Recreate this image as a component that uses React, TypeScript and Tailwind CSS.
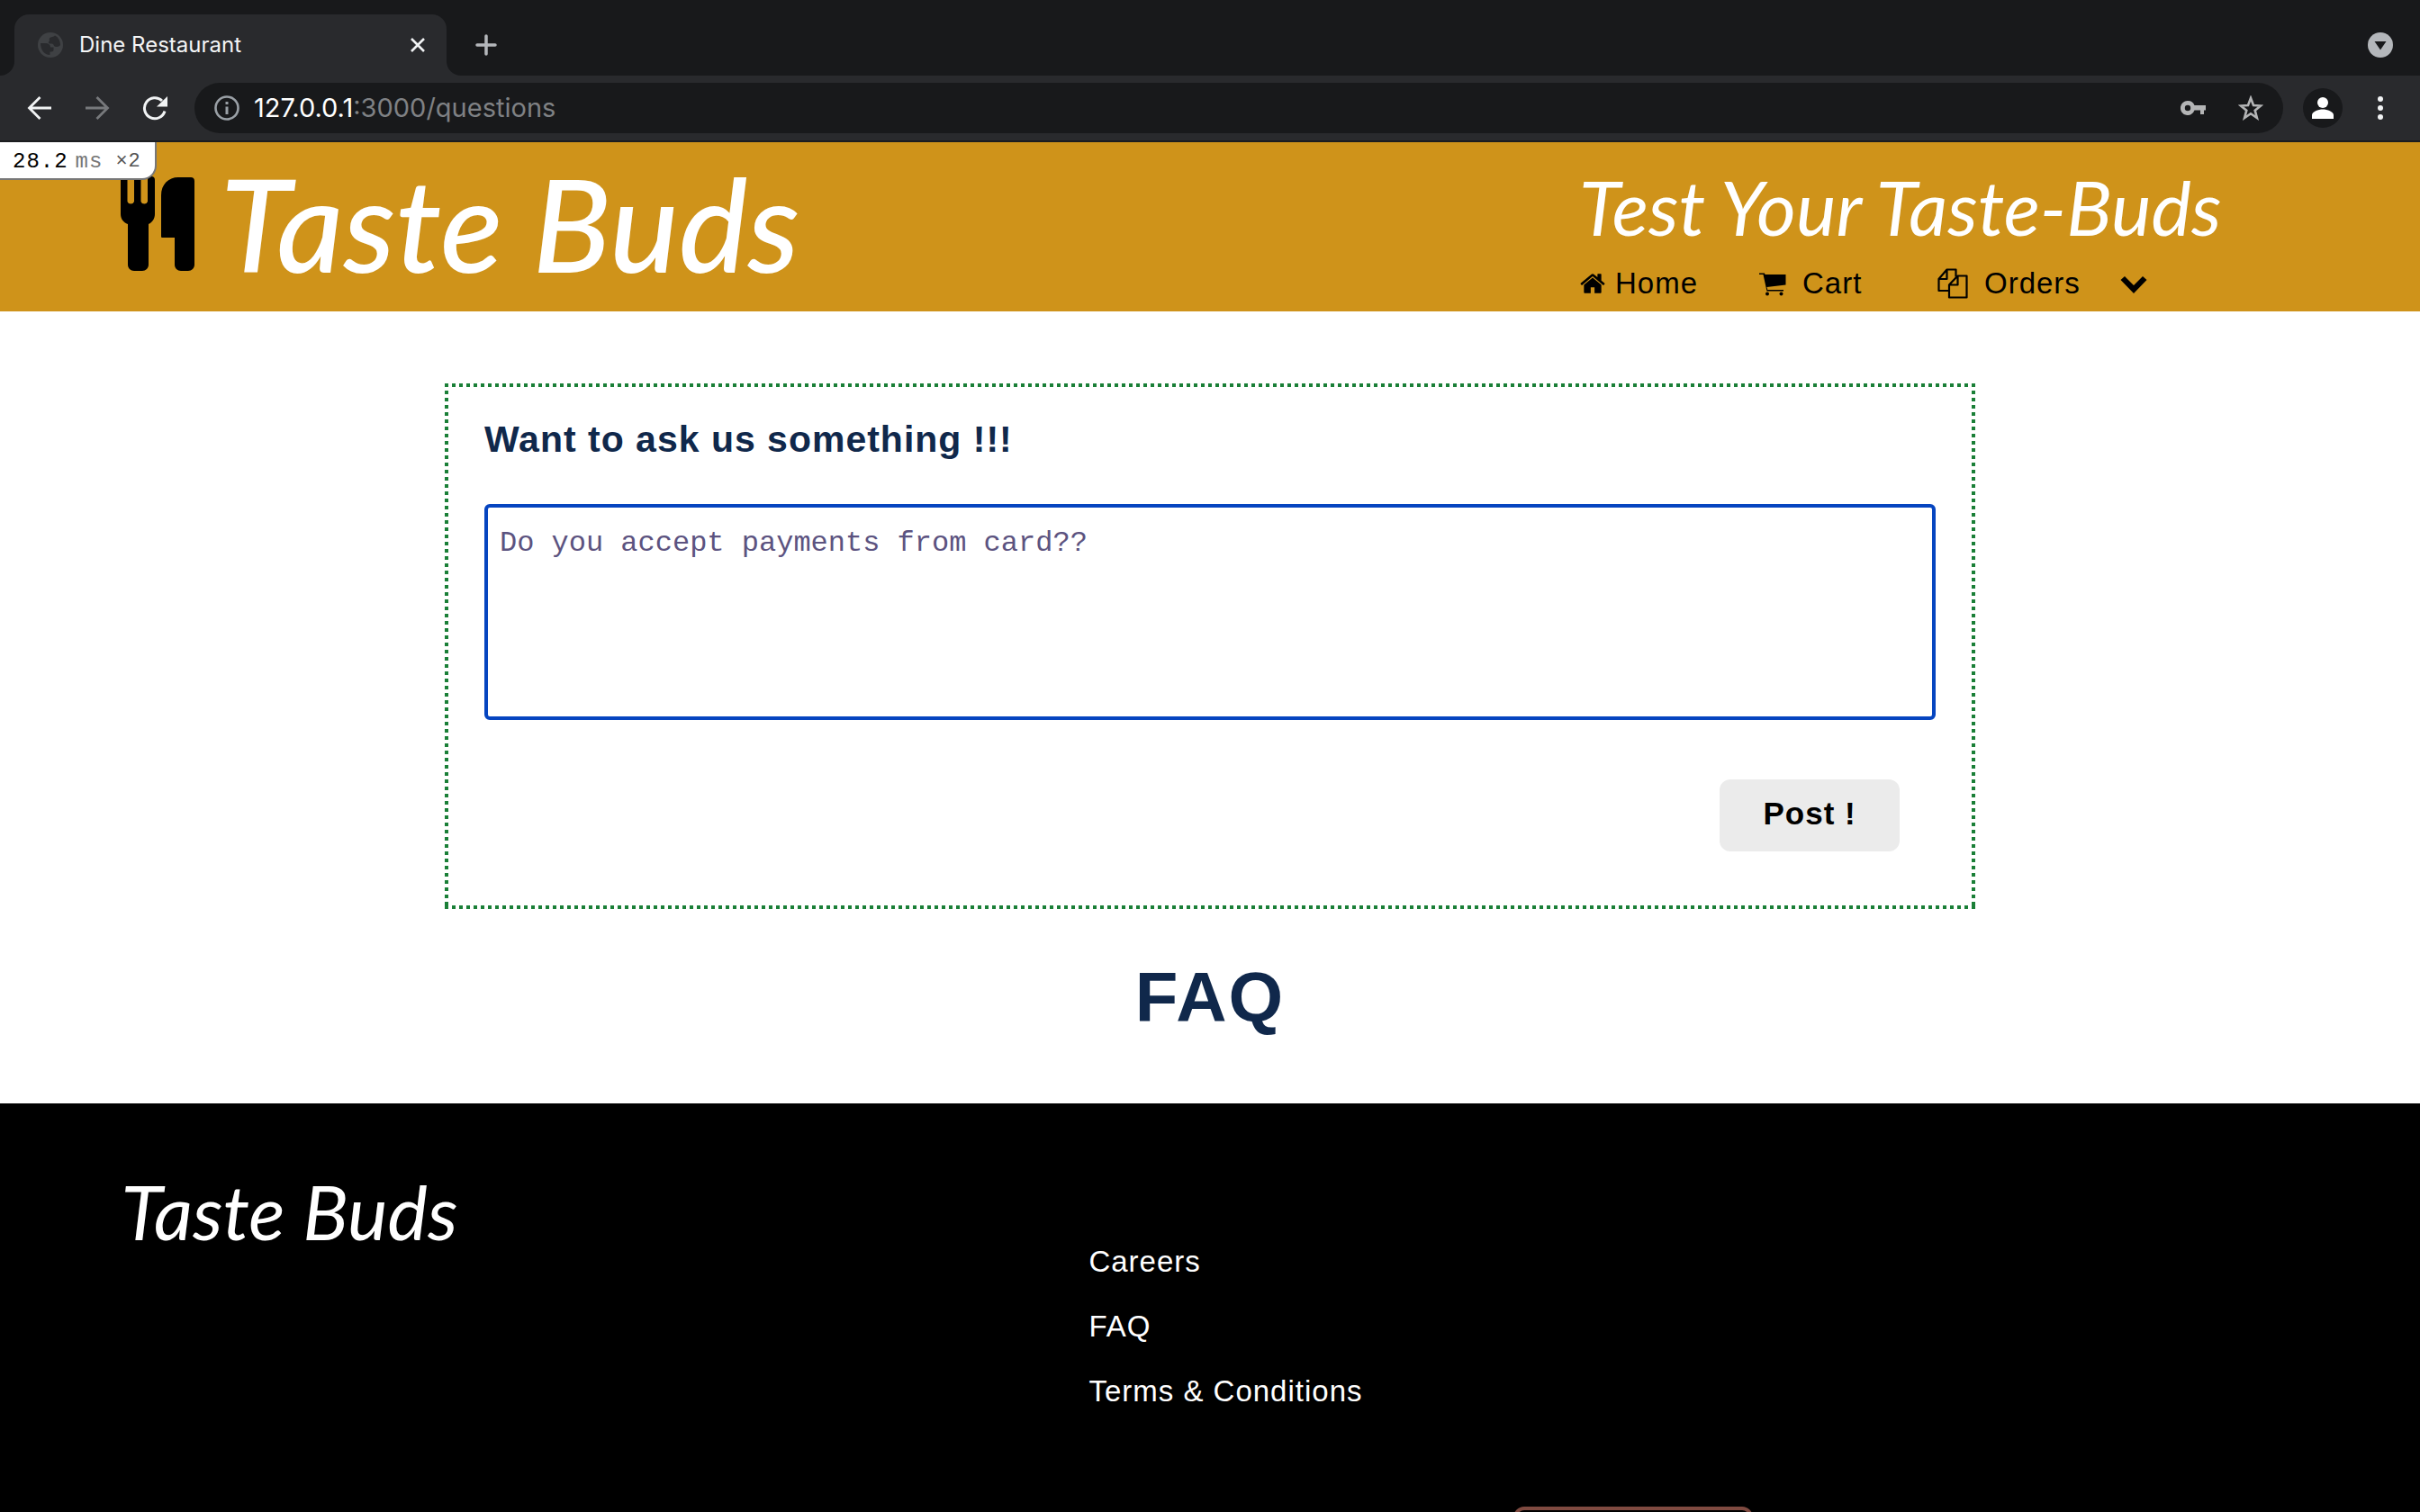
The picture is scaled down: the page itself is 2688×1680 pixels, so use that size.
import React from "react";

const HOME =
  "M1472 992v480q0 26-19 45t-45 19h-384v-384h-256v384h-384q-26 0-45-19t-19-45v-480q0-1 .5-3t.5-3l575-474 575 474q1 2 1 6zm223-69l-62 74q-8 9-21 11h-3q-13 0-21-7l-692-577-692 577q-12 8-24 7-13-2-21-11l-62-74q-8-10-7-23.5t11-21.5l719-599q32-26 76-26t76 26l244 204v-195q0-14 9-23t23-9h192q14 0 23 9t9 23v408l219 182q10 8 11 21.5t-7 23.5z";

function BrowserChrome() {
  return (
    <div className="shrink-0 font-['Inter',sans-serif]">
      <div className="flex h-[84px] items-end bg-[#18191b] pl-4 pr-[30px]">
        <div className="relative flex h-[68px] w-[480px] items-center rounded-t-2xl bg-[#292a2d] pl-[26px] pr-6">
          <svg className="absolute -left-4 bottom-0 size-4" viewBox="0 0 16 16" fill="#292a2d" aria-hidden="true">
            <path d="M16 0v16H0A16 16 0 0 0 16 0z" />
          </svg>
          <svg className="absolute -right-4 bottom-0 size-4" viewBox="0 0 16 16" fill="#292a2d" aria-hidden="true">
            <path d="M0 0v16h16A16 16 0 0 1 0 0z" />
          </svg>
          <svg className="size-7" viewBox="0 0 28 28" aria-hidden="true">
            <circle cx="14" cy="14" r="14" fill="#3f4144" />
            <path
              d="M3 12h5c4 0 6 1.500 6 4.500h3.500v3c0 2-2 2-4 2v3.500C7 25 3 19 3 12zM19 3.500c-1 2-5 1-6 3-.8 1.500.5 2.500-.5 3.500s-1 2.500 1 2.500h2c2.500 0 2 3.500 4.500 3.500s4-.5 5-2C25 9 22.500 5 19 3.500z"
              fill="#292a2d"
            />
          </svg>
          <span className="ml-[18px] flex-1 text-2xl text-[#f4f5f6]">Dine Restaurant</span>
          <button aria-label="Close tab" className="size-4">
            <svg viewBox="0 0 16 16" stroke="#f1f3f4" strokeWidth="2.6">
              <path d="M1 1l14 14M15 1L1 15" />
            </svg>
          </button>
        </div>
        <button aria-label="New tab" className="mb-[22px] ml-8 size-6">
          <svg viewBox="0 0 24 24" stroke="#b4b7bb" strokeWidth="3.500" strokeLinecap="round">
            <path d="M12 2v20M2 12h20" />
          </svg>
        </button>
        <button aria-label="Search tabs" className="mb-5 ml-auto size-7">
          <svg viewBox="0 0 28 28">
            <circle cx="14" cy="14" r="14" fill="#b4b7bb" />
            <path d="M7.500 10h13l-6.500 9.500z" fill="#18191b" />
          </svg>
        </button>
      </div>
      <div className="flex h-[74px] items-center border-b-2 border-[#1b1c1f] bg-[#292a2d] pl-[30px] pr-[38px]">
        <button aria-label="Back" className="size-7">
          <svg viewBox="0 0 28 28" fill="none" stroke="#f1f3f4" strokeWidth="2.800">
            <path d="M27 14H3M14.500 2L2.500 14l12 12" />
          </svg>
        </button>
        <button aria-label="Forward" className="ml-9 size-7">
          <svg viewBox="0 0 28 28" fill="none" stroke="#77797c" strokeWidth="2.800">
            <path d="M1 14h24M13.500 2l12 12-12 12" />
          </svg>
        </button>
        <button aria-label="Reload" className="ml-9 size-7">
          <svg viewBox="0 0 28 28" fill="none">
            <path d="M25 17.500A11.500 11.500 0 1 1 22 6" stroke="#f1f3f4" strokeWidth="3" />
            <path d="M28 1v11.500H16z" fill="#f1f3f4" />
          </svg>
        </button>
        <div className="ml-[30px] flex h-14 flex-1 items-center rounded-full bg-[#18191b] pl-[22px] pr-[22px]">
          <svg className="size-7" viewBox="0 0 28 28" fill="none" aria-hidden="true">
            <circle cx="14" cy="14" r="12.500" stroke="#9aa0a6" strokeWidth="2.600" />
            <path d="M14 12.500v8.500M14 7v3" stroke="#9aa0a6" strokeWidth="3" />
          </svg>
          <a href="#url" className="ml-4 flex-1 text-[29px] leading-8 text-[#7f8184]">
            <span className="text-white">127.0.0.1</span>:3000/questions
          </a>
          <button aria-label="Passwords" className="h-4 w-7">
            <svg viewBox="0 0 28 16">
              <path d="M8 0a8 8 0 1 0 7.500 10.500H22V15h4v-4.500h2V5H15.500A8 8 0 0 0 8 0zm0 4.800a3.200 3.200 0 1 1 0 6.400 3.200 3.200 0 0 1 0-6.400z" fill="#b4b5b6" />
            </svg>
          </button>
          <button aria-label="Bookmark" className="ml-9 size-7">
            <svg viewBox="0 0 28 28" fill="none">
              <path d="M14 3l3 8 8 .5-6.300 5.200 2.200 8.300-6.900-4.700L7.100 25l2.200-8.300L3 11.500l8-.5z" stroke="#b4b5b6" strokeWidth="2.600" />
            </svg>
          </button>
        </div>
        <button aria-label="Profile" className="ml-[22px] size-11 rounded-full bg-[#18191b]">
          <svg viewBox="0 0 44 44" fill="#fff">
            <circle cx="22" cy="16" r="6" />
            <path d="M10 34v-4c0-4 7-6.500 12-6.500S34 26 34 30v4z" />
          </svg>
        </button>
        <button aria-label="Menu" className="ml-9 h-7 w-3">
          <svg viewBox="0 0 12 28" fill="#f1f3f4">
            <circle cx="6" cy="4" r="3" />
            <circle cx="6" cy="14" r="3" />
            <circle cx="6" cy="24" r="3" />
          </svg>
        </button>
      </div>
    </div>
  );
}

function ProfilerBadge() {
  return (
    <div className="absolute left-0 top-0 flex h-[42px] w-[174px] items-center rounded-br-2xl border-b-2 border-r-2 border-[#777] bg-white pl-[14px] pt-1 font-['Liberation_Mono',monospace] text-2xl leading-8 tracking-[1px] text-black">
      28.2
      <span className="ml-2 text-[#777]">ms</span>
      <span className="ml-[14px] text-[22px] text-[#555]">×2</span>
    </div>
  );
}

function SiteHeader() {
  return (
    <header className="relative flex h-[188px] shrink-0 bg-[#cf931a] pl-[5%]">
      <a href="#home" className="flex items-start">
        <svg className="mt-[38px] h-[106px] w-[82px]" viewBox="0 0 82 106" aria-hidden="true">
          <path d="M0 4a4 4 0 0 1 7.500 0v24a4 4 0 0 0 7.500 0V4a4 4 0 0 1 7.500 0v24a4 4 0 0 0 7.500 0V4a4 4 0 0 1 8 0v38c0 5-3 9-7 11v45c0 4-3 7-7 7h-9c-4 0-7-3-7-7V53c-5-2-8-6-8-11z" />
          <path d="M64 1h14c2.500 0 4 1.500 4 4v93c0 4-3 7-7 7h-8c-4 0-7-3-7-7V68H46.500c-1 0-1.500-.5-1.500-1.500V21C45 9 53 1 64 1z" />
        </svg>
        <span className="ml-[28px] mt-[14px] whitespace-nowrap font-['Lato',cursive] text-[144px] font-medium italic leading-[152px] text-white">
          Taste Buds
        </span>
      </a>
      <div className="ml-auto w-[934px] pt-6">
        <p className="whitespace-nowrap font-['Lato',cursive] text-[84px] italic leading-[96px] text-white">Test Your Taste-Buds</p>
        <nav className="mt-[17px] flex items-center text-[33px] leading-[40px] tracking-[1px] text-black">
          <a href="#home" className="flex w-[200px] items-center gap-[10px]">
            <svg className="size-[30px]" viewBox="0 0 1792 1792"><path d={HOME} /></svg>
            Home
          </a>
          <a href="#cart" className="flex w-[198px] items-center gap-[18px]">
            <svg className="size-[30px]" viewBox="0 0 30 30" aria-hidden="true">
              <path d="M0 3.500h6l.5 1.500h23v11.500L8.500 19l.8 3H27v1.600H8.500L4.500 5H0z" />
              <circle cx="9" cy="26.500" r="2" />
              <circle cx="24.500" cy="26.500" r="2" />
            </svg>
            Cart
          </a>
          <a href="#orders" className="flex items-center gap-[18px]">
            <svg className="size-[34px]" viewBox="0 0 34 34" fill="none" stroke="#000" strokeWidth="2.200" strokeLinejoin="round" aria-hidden="true">
              <path d="M13 25H1.500V12l9-10.500H20.500v8M10.500 1.500V12h-9" />
              <path d="M13 18.500L22.500 8.500H32.500V32.500H13zM22.500 8.500v10H13" />
            </svg>
            Orders
          </a>
          <button aria-label="More" className="ml-11 size-[30px]">
            <svg viewBox="0 0 30 30"><path d="M5 7l10 10L25 7l4.500 4L15 26 .5 11z" /></svg>
          </button>
        </nav>
      </div>
      <ProfilerBadge />
    </header>
  );
}

function AskForm() {
  return (
    <form className="mx-auto mt-20 w-[63.25%] bg-[repeating-linear-gradient(90deg,#1a7f37_0_4px,transparent_4px_8px),repeating-linear-gradient(90deg,#1a7f37_0_4px,transparent_4px_8px),repeating-linear-gradient(180deg,#1a7f37_0_4px,transparent_4px_8px),repeating-linear-gradient(180deg,#1a7f37_0_4px,transparent_4px_8px)] bg-[length:100%_4px,100%_4px,4px_100%,4px_100%] bg-[position:left_top,left_bottom,left_top,right_top] bg-no-repeat px-11 pb-16 pt-9">
      <label htmlFor="question" className="block text-[41px] font-bold leading-[52px] tracking-[1px] text-[#10284b]">
        Want to ask us something !!!
      </label>
      <textarea
        id="question"
        defaultValue="Do you accept payments from card??"
        className="mt-[46px] block h-60 w-full resize-none rounded-md border-4 border-[#0645c0] bg-white px-[13px] py-[22px] font-['Liberation_Mono',monospace] text-[32px] leading-[36px] text-[#5c5380] outline-none"
      />
      <button type="button" className="ml-auto mr-10 mt-[66px] block h-20 w-[200px] rounded-xl bg-[#ebebeb] pb-1 text-[35px] font-bold leading-[40px] tracking-[1px] text-black">
        Post !
      </button>
    </form>
  );
}

function SiteFooter() {
  return (
    <footer className="mt-[70px] flex-1 bg-black px-[5%] text-white">
      <div className="grid grid-cols-[1075px_1fr] pt-20">
        <a href="#home" className="whitespace-nowrap font-['Lato',cursive] text-[84px] italic leading-[80px]">Taste Buds</a>
        <ul className="pt-[76px] text-[33px] leading-[40px] tracking-[1px]">
          <li className="h-[72px]"><a href="#careers">Careers</a></li>
          <li className="h-[72px]"><a href="#faq">FAQ</a></li>
          <li className="h-[72px]"><a href="#terms">Terms &amp; Conditions</a></li>
        </ul>
      </div>
      <button aria-label="Contact" className="ml-[1547px] mt-[76px] block h-16 w-[266px] rounded-xl border-4 border-[#7f4a40]" />
    </footer>
  );
}

export default function App() {
  return (
    <div className="flex h-screen flex-col overflow-hidden bg-white font-['Liberation_Sans',sans-serif]">
      <BrowserChrome />
      <SiteHeader />
      <main className="shrink-0">
        <AskForm />
        <h1 className="mt-[50px] text-center text-[78px] font-bold leading-[96px] tracking-[2px] text-[#10284b]">FAQ</h1>
      </main>
      <SiteFooter />
    </div>
  );
}
